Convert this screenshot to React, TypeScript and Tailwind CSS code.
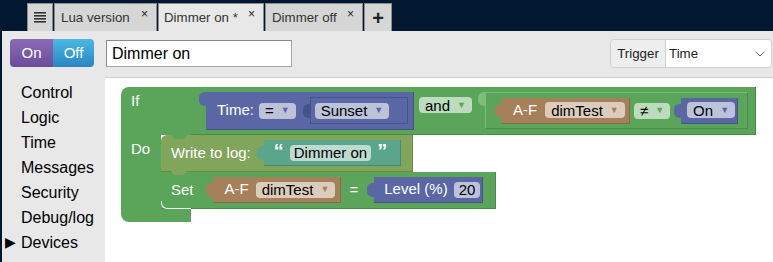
import React from 'react';

const font = { fontFamily: '"Liberation Sans", Arial, sans-serif' };

function Tab({ label, active, width, pad }: { label: string; active?: boolean; width: string; pad: string }) {
  return (
    <div
      className={
        'relative flex h-[28px] items-center border border-b-0 border-[#8c8c8c] text-[13.3px] text-[#333] ' +
        width +
        ' ' +
        pad +
        ' ' +
        (active ? 'bg-[#e8e8e8]' : 'bg-[#d6d6d6]')
      }
    >
      {label}
      <span className="absolute right-[8px] top-[4px] text-[12px] leading-none text-[#222]">×</span>
    </div>
  );
}

// little puzzle tab on the left of a value block
function Nub({ color }: { color: string }) {
  return (
    <svg width="8" height="14" viewBox="0 0 8 14" className="-mr-px shrink-0">
      <path d="M8 0 L8 14 L6 14 C2 14 0 11 0 9 L0 5 C0 3 2 0 6 0 Z" fill={color} />
    </svg>
  );
}

function Chip({ text, arrow, tint, arrowColor, px = 'px-[6px]' }: { text: string; arrow?: boolean; tint: string; arrowColor?: string; px?: string }) {
  return (
    <div className={'flex h-[16px] items-center rounded-[4px] text-[15px] leading-none text-black ' + px + ' ' + tint}>
      {text}
      {arrow && (
        <span className="ml-[7px] text-[9px]" style={{ color: arrowColor }}>
          ▼
        </span>
      )}
    </div>
  );
}

export default function App() {
  return (
    <div className="flex h-[262px] w-[773px] flex-col overflow-hidden bg-[#011830]" style={font}>
      {/* tab strip */}
      <div className="flex h-[31px] shrink-0 items-end gap-px pl-[27px]">
        <div className="flex h-[28px] w-[26px] items-center justify-center border border-b-0 border-[#8c8c8c] bg-[#d6d6d6]">
          <svg width="12" height="11" viewBox="0 0 12 11">
            <rect x="0" y="0" width="12" height="1.6" fill="#333" />
            <rect x="0" y="3" width="12" height="1.6" fill="#333" />
            <rect x="0" y="6" width="12" height="1.6" fill="#333" />
            <rect x="0" y="9" width="12" height="1.6" fill="#333" />
          </svg>
        </div>
        <Tab label="Lua version" width="w-[103px]" pad="pl-[6px]" />
        <Tab label="Dimmer on *" active width="w-[106px]" pad="pl-[5px]" />
        <Tab label="Dimmer off" width="w-[98px]" pad="pl-[6px]" />
        <div className="flex h-[28px] w-[28px] items-center justify-center border border-b-0 border-[#8c8c8c] bg-[#d6d6d6] text-[20px] font-bold leading-none text-[#222]">
          +
        </div>
      </div>

      {/* page */}
      <div className="ml-[2px] flex flex-1 flex-col bg-[#e8e8e8]">
        {/* toolbar */}
        <div className="flex h-[46px] shrink-0 items-start pl-[8px] pt-[8px]">
          <div className="flex h-[28px] overflow-hidden rounded-[4px] text-[15px] text-white">
            <div className="flex w-[43px] items-center justify-center bg-gradient-to-b from-[#8b6bb8] to-[#6b4c9a]">On</div>
            <div className="flex w-[41px] items-center justify-center bg-gradient-to-b from-[#4ab8e2] to-[#2a86c4]">Off</div>
          </div>
          <div className="ml-[12px] mt-[1px] flex h-[27px] w-[186px] items-center border border-[#a6a6a6] border-t-[#8a8a8a] border-l-[#8a8a8a] bg-white pl-[5px] text-[16px] text-black">
            Dimmer on
          </div>
          <div className="ml-auto mr-[1px] flex h-[29px] w-[162px] overflow-hidden rounded-[4px] border border-[#cfcfcf] text-[13.3px] text-[#222]">
            <div className="flex w-[55px] items-center justify-center border-r border-[#cfcfcf] bg-[#eeeeee]">Trigger</div>
            <div className="flex flex-1 items-center bg-white pl-[3px]">
              Time
              <svg width="10" height="6" viewBox="0 0 10 6" className="ml-auto mr-[6px]">
                <path d="M0.5 0.5 L5 5 L9.5 0.5" stroke="#666" strokeWidth="1" fill="none" />
              </svg>
            </div>
          </div>
        </div>

        <div className="flex flex-1">
          {/* toolbox */}
          <div className="w-[103px] shrink-0 pt-[3px] text-[16px] leading-[25px] text-black">
            <div className="pl-[19px]">Control</div>
            <div className="pl-[19px]">Logic</div>
            <div className="pl-[19px]">Time</div>
            <div className="pl-[19px]">Messages</div>
            <div className="pl-[19px]">Security</div>
            <div className="pl-[19px]">Debug/log</div>
            <div className="flex items-center pl-[3px]">
              <span className="mr-[5px] text-[14px]">▶</span>Devices
            </div>
          </div>

          {/* workspace */}
          <div className="flex-1 border-t border-[#cccccc] bg-white pl-[16px] pt-[9px] text-[15px] text-white">
            <div className="flex flex-col">
              {/* If row */}
              <div className="flex">
                <div className="h-[48px] w-[70px] rounded-tl-[8px] bg-[#5ba55b] pl-[10px] pt-[3px]">If</div>
                {/* and block */}
                <div className="flex h-[48px] w-[565px] items-start border-b border-r border-[#4a8a4a] border-l-[#7cbd7c] bg-[#5ba55b] pl-[8px] pt-[5px]">
                  <Nub color="#5b67a5" />
                  <div className="flex h-[38px] w-[208px] items-center border-b border-r border-[#48528a] bg-[#5b67a5] pl-[11px]">
                    <span>Time:</span>
                    <div className="ml-[5px]">
                      <Chip text="=" arrow tint="bg-[#bdc2db]" arrowColor="#5b67a5" />
                    </div>
                    <div className="ml-[7px] flex items-center">
                      <Nub color="#48528a" />
                      <div className="flex h-[27px] w-[98px] items-center border border-[#48528a] bg-[#5b67a5] pl-[4px]">
                        <Chip text="Sunset" arrow tint="bg-[#bdc2db]" arrowColor="#5b67a5" />
                      </div>
                    </div>
                  </div>
                  <div className="ml-[5px] mt-[5px]">
                    <Chip text="and" arrow tint="bg-[#bddbbd]" arrowColor="#5ba55b" />
                  </div>
                  <div className="ml-[6px] flex">
                    <Nub color="#7cbd7c" />
                    <div className="flex h-[37px] w-[263px] items-center border border-[#7cbd7c] border-b-[#4a8a4a] border-r-[#4a8a4a] bg-[#5ba55b] pl-[9px]">
                      <Nub color="#a5805b" />
                      <div className="flex h-[26px] w-[128px] items-center border-b border-r border-[#86684a] bg-[#a5805b] pl-[11px]">
                        <span>A-F</span>
                        <div className="ml-[8px]">
                          <Chip text="dimTest" arrow tint="bg-[#dbccbd]" arrowColor="#a5805b" />
                        </div>
                      </div>
                      <div className="ml-[4px]">
                        <Chip text="≠" arrow tint="bg-[#bddbbd]" arrowColor="#5ba55b" />
                      </div>
                      <div className="ml-[4px] flex items-center">
                        <Nub color="#5b67a5" />
                        <div className="flex h-[26px] w-[57px] items-center border-b border-r border-[#48528a] bg-[#5b67a5] pl-[6px]">
                          <Chip text="On" arrow tint="bg-[#bdc2db]" arrowColor="#5b67a5" />
                        </div>
                      </div>
                    </div>
                  </div>
                </div>
              </div>

              {/* Do section */}
              <div className="flex">
                <div className="w-[40px] bg-[#5ba55b] pl-[10px] pt-[3px]">Do</div>
                <div className="flex flex-col">
                  {/* write to log */}
                  <div className="relative flex h-[37px] w-[252px] items-center rounded-tl-[6px] border-b border-r border-[#6a8a48] bg-[#80a55b] pl-[10px]">
                    <svg width="16" height="5" viewBox="0 0 16 5" className="absolute left-[10px] top-0">
                      <path d="M0 0 L3 4 L13 4 L16 0 Z" fill="#5ba55b" />
                    </svg>
                    <svg width="16" height="5" viewBox="0 0 16 5" className="absolute bottom-[-5px] left-[10px] z-10">
                      <path d="M0 0 L3 4 L13 4 L16 0 Z" fill="#80a55b" />
                    </svg>
                    <span>Write to log:</span>
                    <div className="ml-[6px] flex items-center">
                      <Nub color="#5ba58c" />
                      <div className="flex h-[26px] w-[137px] items-center border-b border-r border-[#488a72] bg-[#5ba58c] pl-[10px]">
                        <span className="-mt-[4px] text-[20px] font-bold leading-none">“</span>
                        <div className="ml-[6px]">
                          <Chip text="Dimmer on" tint="bg-[#bddbd1]" px="px-[4px]" />
                        </div>
                        <span className="-mt-[4px] ml-[6px] text-[20px] font-bold leading-none">”</span>
                      </div>
                    </div>
                  </div>
                  {/* set */}
                  <div className="relative flex h-[37px] w-[335px] items-center border-b border-r border-[#4a8a4a] bg-[#5ba55b] pl-[10px]">
                    <div className="absolute bottom-[-1px] left-0 h-[8px] w-[30px] rounded-bl-[6px] border-b border-l border-[#eef6ee]" />
                    <span>Set</span>
                    <div className="ml-[12px] flex items-center">
                      <Nub color="#a5805b" />
                      <div className="flex h-[26px] w-[128px] items-center border-b border-r border-[#86684a] bg-[#a5805b] pl-[12px]">
                        <span>A-F</span>
                        <div className="ml-[7px]">
                          <Chip text="dimTest" arrow tint="bg-[#dbccbd]" arrowColor="#a5805b" />
                        </div>
                      </div>
                    </div>
                    <span className="ml-[9px]">=</span>
                    <div className="ml-[9px] flex items-center">
                      <Nub color="#5b67a5" />
                      <div className="flex h-[26px] w-[109px] items-center border-b border-r border-[#48528a] bg-[#5b67a5] pl-[10px]">
                        <span>Level (%)</span>
                        <div className="ml-[6px]">
                          <Chip text="20" tint="bg-[#bdc2db]" px="px-[5px]" />
                        </div>
                      </div>
                    </div>
                  </div>
                </div>
              </div>
              <div className="h-[13px] w-[70px] rounded-bl-[8px] bg-[#5ba55b]" />
            </div>
          </div>
        </div>
      </div>
    </div>
  );
}
